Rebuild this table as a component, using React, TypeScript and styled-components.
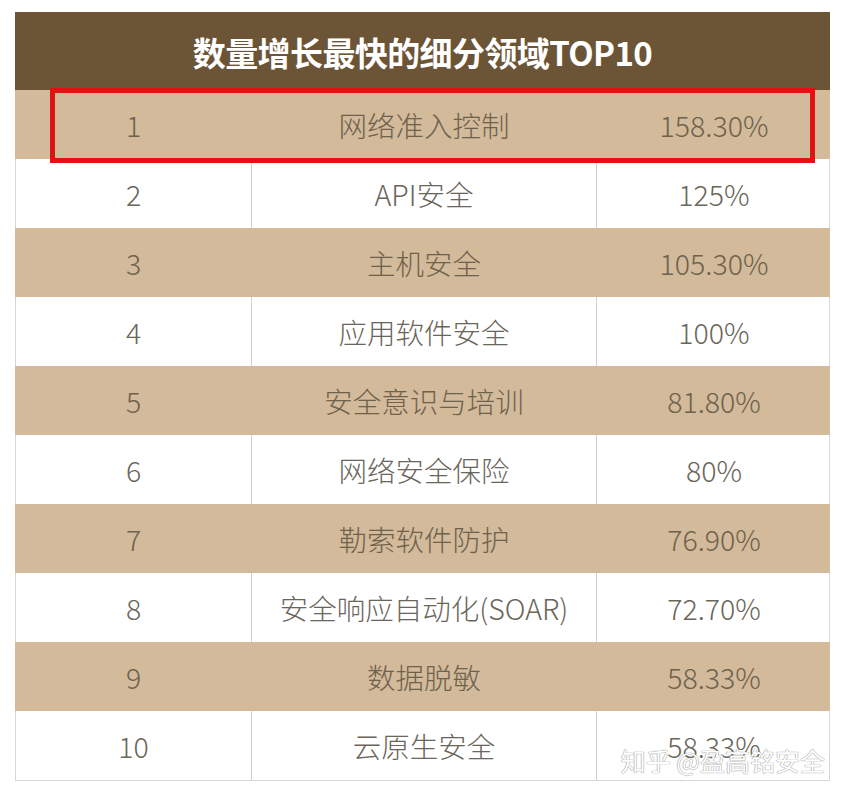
import React from "react";
import styled, { createGlobalStyle } from "styled-components";

const Global = createGlobalStyle`
  html, body { margin: 0; padding: 0; background: #ffffff; }
  body { font-family: "Noto Sans CJK SC", "Noto Sans", sans-serif; }
`;

const Page = styled.div`
  width: 845px;
  height: 801px;
  padding: 12px 15px 0 15px;
  box-sizing: border-box;
`;

const Table = styled.div`
  position: relative;
  width: 815px;
  display: flex;
  flex-direction: column;
  border-bottom: 1px solid #d6d6d6;
`;

const Header = styled.div`
  height: 78px;
  background: #6c5536;
  color: #ffffff;
  display: flex;
  align-items: center;
  justify-content: center;
  font-family: "Noto Sans CJK SC", sans-serif;
  font-weight: 700;
  font-size: 33px;
  letter-spacing: -0.6px;
  padding-top: 2px;
  box-sizing: border-box;
`;

const Row = styled.div<{ $shaded: boolean }>`
  height: 69px;
  display: grid;
  grid-template-columns: 235px 345px 235px;
  background: ${(p) => (p.$shaded ? "#d2ba9b" : "#ffffff")};
  box-sizing: border-box;
  border-left: 1px solid ${(p) => (p.$shaded ? "#d2ba9b" : "#d6d6d6")};
  border-right: 1px solid ${(p) => (p.$shaded ? "#d2ba9b" : "#d6d6d6")};
`;

const Cell = styled.div<{ $shaded: boolean; $divider?: boolean }>`
  display: flex;
  align-items: center;
  justify-content: center;
  font-family: "Noto Sans CJK SC", "Noto Sans", sans-serif;
  font-weight: 300;
  font-size: 28.5px;
  color: ${(p) => (p.$shaded ? "#6f624c" : "#6a665a")};
  border-left: ${(p) =>
    p.$divider ? `1px solid ${p.$shaded ? "#d2ba9b" : "#d0d0d0"}` : "none"};
  white-space: nowrap;
`;

const Highlight = styled.div`
  position: absolute;
  left: 35px;
  top: 76px;
  width: 765px;
  height: 75px;
  box-sizing: border-box;
  border: 5px solid #e01212;
  pointer-events: none;
`;

const Watermark = styled.div`
  position: absolute;
  right: 5px;
  bottom: 2px;
  font-family: "Noto Sans CJK SC", sans-serif;
  font-size: 25px;
  font-weight: 400;
  color: #ffffff;
  text-shadow: 0 0 1px #8a8a8a, 0 0 1px #8a8a8a;
  white-space: nowrap;
`;

const rows: [string, string, string][] = [
  ["1", "网络准入控制", "158.30%"],
  ["2", "API安全", "125%"],
  ["3", "主机安全", "105.30%"],
  ["4", "应用软件安全", "100%"],
  ["5", "安全意识与培训", "81.80%"],
  ["6", "网络安全保险", "80%"],
  ["7", "勒索软件防护", "76.90%"],
  ["8", "安全响应自动化(SOAR)", "72.70%"],
  ["9", "数据脱敏", "58.33%"],
  ["10", "云原生安全", "58.33%"],
];

export default function App() {
  return (
    <Page>
      <Global />
      <Table>
        <Header>数量增长最快的细分领域TOP10</Header>
        {rows.map((r, i) => {
          const shaded = i % 2 === 0;
          return (
            <Row key={r[0]} $shaded={shaded}>
              <Cell $shaded={shaded}>{r[0]}</Cell>
              <Cell $shaded={shaded} $divider>
                {r[1]}
              </Cell>
              <Cell $shaded={shaded} $divider>
                {r[2]}
              </Cell>
            </Row>
          );
        })}
        <Highlight />
        <Watermark>知乎 @盈高铭安全</Watermark>
      </Table>
    </Page>
  );
}
